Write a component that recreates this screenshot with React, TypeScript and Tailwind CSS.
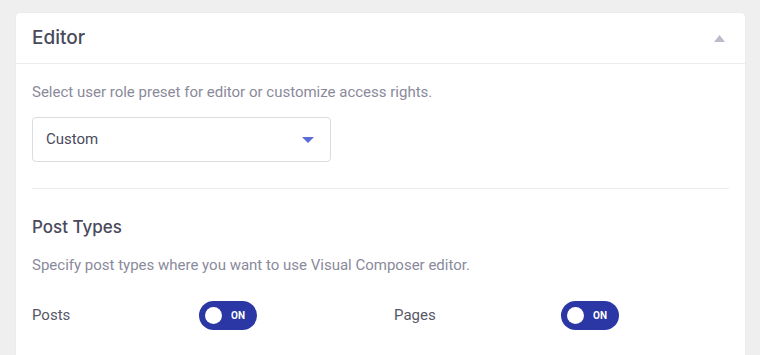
import React from 'react';

const Toggle: React.FC<{ on: boolean }> = ({ on }) => (
  <div className="flex h-[29px] w-[58px] items-center rounded-full bg-[#2a37a4] pl-[6px]">
    <span className="h-[17px] w-[17px] rounded-full bg-white" />
    <span className="ml-[9px] text-[10px] font-bold text-white [font-family:Roboto,sans-serif]">
      {on ? 'ON' : 'OFF'}
    </span>
  </div>
);

const PostTypeRow: React.FC<{ label: string }> = ({ label }) => (
  <div className="flex items-center">
    <span className="w-[167px] text-[15px] text-[#575767]">{label}</span>
    <Toggle on />
  </div>
);

export default function App() {
  return (
    <div className="h-[355px] w-[760px] overflow-hidden bg-[#efefef] pl-[16px] pt-[13px] [font-family:Roboto,sans-serif]">
      <div className="h-[360px] w-[729px] rounded-[4px] bg-white shadow-[0_0_2px_rgba(0,0,0,0.06)]">
        <div className="flex h-[51px] items-center justify-between border-b border-[#ececec] px-[16px]">
          <h2 className="text-[19px] font-medium text-[#4a4a5c] [font-family:Inter,sans-serif]">Editor</h2>
          <svg width="11" height="7" viewBox="0 0 11 7" className="mr-[4px]">
            <path d="M0 7 L5.5 0 L11 7 Z" fill="#b9bdc9" />
          </svg>
        </div>
        <div className="px-[16px] pt-[18px]">
          <p className="text-[15px] leading-[20px] text-[#8a8a9b]">
            Select user role preset for editor or customize access rights.
          </p>
          <div className="mt-[15px] flex h-[45px] w-[299px] items-center justify-between rounded-[4px] border border-[#dcdce0] pl-[13px] pr-[16px]">
            <span className="text-[15px] text-[#4a4a5c]">Custom</span>
            <svg width="12" height="6" viewBox="0 0 12 6">
              <path d="M0 0 L12 0 L6 6 Z" fill="#5b6dd6" />
            </svg>
          </div>
          <div className="mt-[26px] border-t border-[#ececec]" />
          <h3 className="mt-[27px] text-[17px] font-medium leading-[22px] text-[#4a4a5c] [font-family:Inter,sans-serif]">
            Post Types
          </h3>
          <p className="mt-[17px] text-[15px] leading-[20px] text-[#8a8a9b]">
            Specify post types where you want to use Visual Composer editor.
          </p>
          <div className="mt-[26px] grid grid-cols-[362px_1fr]">
            <PostTypeRow label="Posts" />
            <PostTypeRow label="Pages" />
          </div>
        </div>
      </div>
    </div>
  );
}
